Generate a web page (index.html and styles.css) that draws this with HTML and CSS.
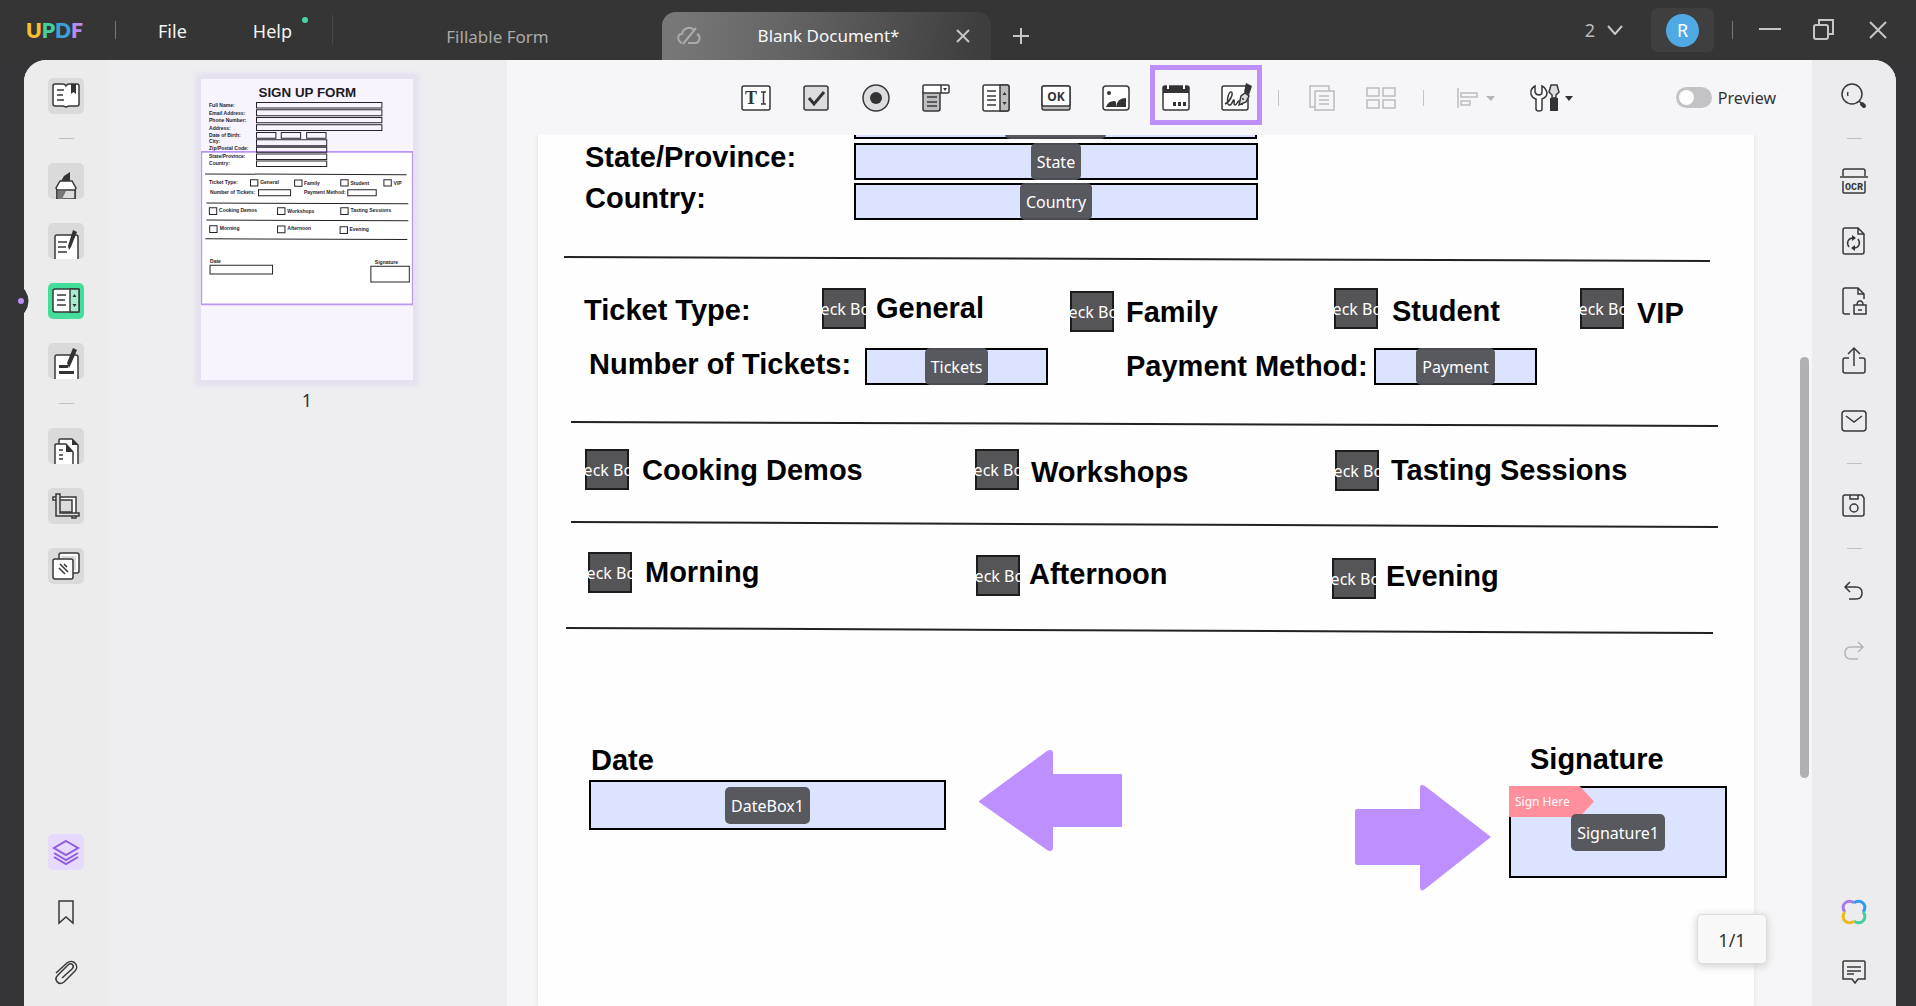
FILE: index.html
```html
<!DOCTYPE html>
<html lang="en">
<head>
<meta charset="utf-8">
<title>UPDF - Blank Document</title>
<link rel="stylesheet" href="styles.css">
</head>
<body>
<header class="titlebar">
  <div class="logo"><span class="logo-u">U</span><span class="logo-p">P</span><span class="logo-d">D</span><span class="logo-f">F</span></div>
  <nav class="menu">
    <button type="button" class="menu-item">File</button>
    <button type="button" class="menu-item">Help<i class="dot"></i></button>
  </nav>
  <div class="tabs">
    <button type="button" class="tab">Fillable Form</button>
    <div class="tab tab-active">
      <svg class="cloud" width="24" height="20" viewBox="0 0 24 20"><path d="M5 17C0 15 0 8 5 8 6 2 13 0 17 4M20 8c4 2 3 9-2 9h-7M19 2 6 18"/></svg>
      <span>Blank Document*</span>
      <button type="button" class="tab-close" aria-label="Close tab"><svg width="14" height="14" viewBox="0 0 14 14"><path d="M1 1l12 12M13 1 1 13"/></svg></button>
    </div>
    <button type="button" class="tab-add" aria-label="New tab"><svg width="18" height="18" viewBox="0 0 18 18"><path d="M9 1v16M1 9h16"/></svg></button>
  </div>
  <div class="window-tools">
    <button type="button" class="count">2 <svg width="16" height="10" viewBox="0 0 16 10"><path d="M1 1l7 8 7-8"/></svg></button>
    <button type="button" class="account"><span class="avatar">R</span></button>
    <div class="controls">
      <button type="button" aria-label="Minimize"><svg width="22" height="22" viewBox="0 0 22 22"><path d="M0 10h22"/></svg></button>
      <button type="button" aria-label="Restore"><svg width="22" height="22" viewBox="0 0 22 22"><rect x="1" y="6" width="14" height="14" rx="2"/><path d="M6 6V1h14v14h-5"/></svg></button>
      <button type="button" aria-label="Close"><svg width="22" height="22" viewBox="0 0 22 22"><path d="M3 3l16 16M19 3 3 19"/></svg></button>
    </div>
  </div>
</header>

<main class="workspace">
  <aside class="rail rail-left">
    <button type="button" class="tool" aria-label="Reader"><svg viewBox="0 0 36 36"><path class="w" d="M7 6h8q2 0 3 2 1-2 3-2h8q2 0 2 2v18q0 2-2 2h-8l-3 1-3-1H7q-2 0-2-2V8q0-2 2-2z"/><path class="s" d="M9 12h7M9 17h6M9 22h7"/><path class="k" d="M23 6h5v10l-2.500-2L23 16z"/></svg></button>
    <hr>
    <button type="button" class="tool" aria-label="Comment"><svg viewBox="0 0 36 36"><path class="k" d="M13 18l3-5 6-4v9z"/><path class="w" d="M9 36v-9l-1-2 4-7h12l4 7-1 2v9"/><path class="g" d="M9 27h18v9H9z"/><path fill="#777" stroke="none" d="M10 28h8l-4 8h-4z"/></svg></button>
    <button type="button" class="tool" aria-label="Edit"><svg viewBox="0 0 36 36"><path class="w" d="M7 36V14q0-2 2-2h19q2 0 2 2v22"/><path class="s" d="M10 19h9M10 24h8M10 29h9"/><path class="k" d="M25 7l4 2-6 15-2 3-1-4z"/></svg></button>
    <button type="button" class="tool tool-active" aria-label="Prepare form"><svg viewBox="0 0 36 36"><rect class="w" x="5" y="6" width="26" height="23" rx="2"/><path class="m" d="M22 6h9v23h-9z"/><path class="s" d="M9 12h9M9 17h8M9 22h9"/><path class="k" d="M24.500 14l2-3 2 3zM24.500 21l2 3 2-3z"/></svg>
      <svg class="notch" viewBox="0 0 14 36"><path d="M0 0h3q0 4 4 7 7 11 0 22-4 3-4 7H0z" fill="#353537"/><circle cx="3" cy="18" r="3" fill="#b98df7" stroke="none"/></svg></button>
    <button type="button" class="tool" aria-label="Redact"><svg viewBox="0 0 36 36"><path class="w" d="M7 36V14q0-2 2-2h19q2 0 2 2v22"/><path class="k" d="M11 22h9v3h-9zM11 28h15v3H11zM25 5l4 2-6 14-2 4-2-5z"/></svg></button>
    <hr>
    <button type="button" class="tool" aria-label="Organize pages"><svg viewBox="0 0 36 36"><path class="w" d="M11 36V12q0-1 1-1h12l6 6v19"/><path class="w" d="M7 36V17q0-1 1-1h10l7 8v12"/><path class="k" d="M18 16v8h7zM24 11v6h6z"/><path class="s" d="M11 22h4M11 27h4M11 31h4"/></svg></button>
    <button type="button" class="tool" aria-label="Crop pages"><svg viewBox="0 0 36 36"><path class="g" d="M11 11h15v13H11z"/><path class="w" d="M5 9h23v21h-4V12H5z"/><path class="g" d="M8 6h4v19h19v3H8z"/></svg></button>
    <button type="button" class="tool" aria-label="Watermark"><svg viewBox="0 0 36 36"><rect class="w" x="11" y="5" width="20" height="20" rx="2"/><path class="g" stroke="none" d="M14 8h14v14H14z"/><rect class="w" x="5" y="11" width="20" height="20" rx="2"/><path class="s" d="M11 20l6 6M12 16l8 8M16 16l3 3"/></svg></button>
    <div class="spacer"></div>
    <button type="button" class="tool tool-layers" aria-label="Thumbnails"><svg viewBox="0 0 36 36"><path d="M18 7l12 7-12 7-12-7zM6 19l12 7 12-7M6 23l12 7 12-7"/></svg></button>
    <button type="button" class="tool tool-plain" aria-label="Bookmarks"><svg viewBox="0 0 36 36"><path d="M11 7h14v22l-7-6-7 6z"/></svg></button>
    <button type="button" class="tool tool-plain" aria-label="Attachments"><svg viewBox="0 0 36 36"><path d="M8 19 19 9c6-5 13 3 8 8L16 28c-5 4-11-2-6-7L20 11c4-3 7 1 4 4L14 24"/></svg></button>
  </aside>

  <aside class="thumbs">
    <a href="#page-1" class="thumb">
      <svg viewBox="63 57 634 901" class="thumb-art">
        <path fill="#f8f4fe" d="M63 57h634v901H63z"/>
        <path fill="#fff" stroke="#bd95f5" stroke-width="5" d="M64 275h632v456H64z"/>
        <text class="thumb-title" x="235" y="111">SIGN UP FORM</text>
        <g class="thumb-text">
          <text x="87" y="141">Full Name:</text><text x="87" y="165">Email Address:</text><text x="87" y="186">Phone Number:</text><text x="87" y="210">Address:</text><text x="87" y="231">Date of Birth:</text><text x="87" y="249">City:</text><text x="87" y="270">Zip/Postal Code:</text><text x="87" y="294">State/Province:</text><text x="87" y="315">Country:</text>
          <text x="87" y="372">Ticket Type:</text><text x="240" y="372">General</text><text x="371" y="375">Family</text><text x="510" y="375">Student</text><text x="639" y="375">VIP</text>
          <text x="90" y="402">Number of Tickets:</text><text x="371" y="402">Payment Method:</text>
          <text x="117" y="456">Cooking Demos</text><text x="321" y="459">Workshops</text><text x="510" y="456">Tasting Sessions</text>
          <text x="119" y="510">Morning</text><text x="321" y="510">Afternoon</text><text x="507" y="513">Evening</text>
          <text x="90" y="608">Date</text><text x="583" y="609">Signature</text>
        </g>
        <g fill="none" stroke="#26232c" stroke-width="3">
          <path d="M229 127h375v17H229zM229 149h375v18H229zM229 172h375v16H229zM229 194h375v17H229zM229 217h58v17h-58zM303 217h58v17h-58zM379 217h58v17h-58zM229 239h210v18H229zM229 261h210v15H229zM229 281h210v17H229zM229 302h210v17H229z"/>
          <path d="M211 358h22v19h-22zM343 359h22v19h-22zM481 358h22v19h-22zM610 358h22v19h-22zM235 388h96v18h-96zM502 388h85v18h-85z"/>
          <path d="M88 442h22v20H88zM292 442h22v20h-22zM481 442h22v20h-22zM89 496h22v20H89zM292 497h22v20h-22zM479 499h22v20h-22zM90 614h187v26H90zM571 617h115v47H571z"/>
          <path d="M75 341l603 2M79 428l604 2M79 479l604 2M76 535l604 2"/>
        </g>
      </svg>
    </a>
    <span class="thumb-number">1</span>
  </aside>

  <section class="viewer">
    <div class="toolbar">
      <button type="button" aria-label="Text field"><svg viewBox="0 0 36 36"><rect class="w" x="4" y="6" width="28" height="24" rx="2"/><text class="t-serif" x="7" y="24">T</text><path class="s" d="M23 12h5M25.500 12v12M23 24h5"/></svg></button>
      <button type="button" aria-label="Check box"><svg viewBox="0 0 36 36"><rect class="g" x="6" y="6" width="24" height="24" rx="2"/><path class="c" d="M11 18l5 6 10-12"/></svg></button>
      <button type="button" aria-label="Radio button"><svg viewBox="0 0 36 36"><circle class="g" cx="18" cy="18" r="13"/><circle class="k" cx="18" cy="18" r="6"/></svg></button>
      <button type="button" aria-label="Dropdown"><svg viewBox="0 0 36 36"><path class="d" d="M5 12h17v17q0 2-2 2H7q-2 0-2-2z"/><rect class="w" x="5" y="5" width="26" height="8" rx="1"/><path class="s" d="M23 5v8M9 17h10M9 22h10M9 26h10"/><path class="k" d="M25 8h4l-2 3z"/></svg></button>
      <button type="button" aria-label="List box"><svg viewBox="0 0 36 36"><rect class="w" x="5" y="5" width="26" height="26" rx="2"/><path class="d" d="M22 5h7q2 0 2 2v22q0 2-2 2h-7z"/><path class="s" d="M9 11h9M9 16h9M9 20h9M9 25h9"/><path class="k" d="M24.500 15l2-3 2 3zM24.500 22l2 3 2-3z"/></svg></button>
      <button type="button" aria-label="Button"><svg viewBox="0 0 36 36"><rect class="d" x="4" y="6" width="28" height="24" rx="2"/><rect class="w" x="4" y="6" width="28" height="20" rx="2"/><text class="t-ok" x="18" y="21">OK</text></svg></button>
      <button type="button" aria-label="Image"><svg viewBox="0 0 36 36"><rect class="w" x="5" y="6" width="26" height="24" rx="3"/><circle class="k" cx="11" cy="13" r="2"/><path class="k" d="M8 27q2-6 8-6 1 0 2 1v5zM18 27q1-9 10-9v9z"/></svg></button>
      <div class="marked">
        <button type="button" aria-label="Date"><svg viewBox="0 0 36 36"><rect class="w" x="5" y="6" width="26" height="24" rx="2"/><path class="k" d="M5 6h26v7H5zM15 22h3v4h-3zM20 22h3v4h-3zM25 22h3v4h-3z"/><path class="n" d="M10 4v5M26 4v5"/></svg></button>
        <button type="button" aria-label="Signature"><svg viewBox="0 0 36 36"><rect class="w" x="4" y="6" width="26" height="24" rx="2"/><path class="s" d="M7 24c6-3 9-12 6-12s-5 12-2 13 4-6 5-5-1 5 1 5 3-5 4-4 0 4 4 3"/><path class="g" d="M21 25l2-9 4-3 4 3-3 6z"/><circle class="k" cx="25" cy="19" r="1"/><path class="k" d="M26 12l2-9 6 3-3 9z"/></svg></button>
      </div>
      <i class="bar"></i>
      <button type="button" class="off" aria-label="Duplicate across pages"><svg viewBox="0 0 36 36"><path d="M12 27H7V6h19v5M12 11h19v19H12zM16 16h10M16 20h10M16 24h10"/></svg></button>
      <button type="button" class="off" aria-label="Create multiple copies"><svg viewBox="0 0 36 36"><path d="M4 8h12v8H4zM20 8h12v8H20zM4 20h12v8H4zM20 20h12v8H20z"/></svg></button>
      <i class="bar"></i>
      <button type="button" class="off wide" aria-label="Align"><svg viewBox="0 0 48 36"><path d="M10 8v20M13 13h16v4H13zM13 21h9v4h-9z"/><path fill="#b5b5b7" stroke="none" d="M38 16h9l-4 5z"/></svg></button>
      <button type="button" class="wide tools" aria-label="Form tools"><svg viewBox="0 0 48 36"><path class="w" d="M9 6q-5 3-4 8 1 4 5 5v10q0 2 3 2t3-2V19q5-2 5-6-1-5-5-7v6q0 3-3 3t-4-3z"/><path class="g" d="M25 5h6l2 7-3 3v3h-4v-3l-3-3z"/><path class="k" d="M24 18h8v13h-8zM39 16h8l-4 5z"/></svg></button>
      <label class="preview"><input type="checkbox" class="switch">Preview</label>
    </div>

    <div class="canvas">
      <article class="sheet" id="page-1">
        <svg class="rules" width="1216" height="871" viewBox="0 0 1216 871">
          <path d="M26 122l1146 4M33 287l1147 4M33 387l1147 5M28 493l1147 5" fill="none" stroke="#222" stroke-width="2"/>
          <path d="M441 666l68-50q6-3 6 3v20h68q1 0 1 1v51q0 1-1 1h-68v20q0 6-6 3l-68-48z" class="arrow"/>
          <path d="M953 702l-66-51q-5-3-5 2v21h-63q-2 0-2 2v52q0 2 2 2h63v21q0 7 5 3z" class="arrow"/>
        </svg>

        <div class="field zip"><input type="text" aria-label="Zip/Postal Code"><span class="chip"></span></div>
        <label class="caption state-label" for="state">State/Province:</label>
        <div class="field state"><input type="text" id="state"><span class="chip">State</span></div>
        <label class="caption country-label" for="country">Country:</label>
        <div class="field country"><input type="text" id="country"><span class="chip">Country</span></div>

        <span class="caption type-label">Ticket Type:</span>
        <div class="tick general"><input type="checkbox" id="general"><span>Check Box1</span></div>
        <label class="caption general-label" for="general">General</label>
        <div class="tick family"><input type="checkbox" id="family"><span>Check Box2</span></div>
        <label class="caption family-label" for="family">Family</label>
        <div class="tick student"><input type="checkbox" id="student"><span>Check Box3</span></div>
        <label class="caption student-label" for="student">Student</label>
        <div class="tick vip"><input type="checkbox" id="vip"><span>Check Box4</span></div>
        <label class="caption vip-label" for="vip">VIP</label>

        <label class="caption tickets-label" for="tickets">Number of Tickets:</label>
        <div class="field tickets"><input type="text" id="tickets"><span class="chip">Tickets</span></div>
        <label class="caption payment-label" for="payment">Payment Method:</label>
        <div class="field payment"><input type="text" id="payment"><span class="chip">Payment</span></div>

        <div class="tick cooking"><input type="checkbox" id="cooking"><span>Check Box5</span></div>
        <label class="caption cooking-label" for="cooking">Cooking Demos</label>
        <div class="tick workshops"><input type="checkbox" id="workshops"><span>Check Box6</span></div>
        <label class="caption workshops-label" for="workshops">Workshops</label>
        <div class="tick tasting"><input type="checkbox" id="tasting"><span>Check Box7</span></div>
        <label class="caption tasting-label" for="tasting">Tasting Sessions</label>

        <div class="tick morning"><input type="checkbox" id="morning"><span>Check Box8</span></div>
        <label class="caption morning-label" for="morning">Morning</label>
        <div class="tick afternoon"><input type="checkbox" id="afternoon"><span>Check Box9</span></div>
        <label class="caption afternoon-label" for="afternoon">Afternoon</label>
        <div class="tick evening"><input type="checkbox" id="evening"><span>Check Box0</span></div>
        <label class="caption evening-label" for="evening">Evening</label>

        <label class="caption date-label" for="date">Date</label>
        <div class="field date"><input type="text" id="date"><span class="chip">DateBox1</span></div>
        <label class="caption signature-label" for="signature">Signature</label>
        <div class="field signature"><input type="text" id="signature"><span class="flag">Sign Here</span><span class="chip">Signature1</span></div>
      </article>
      <i class="scroll-thumb"></i>
      <output class="page-count">1/1</output>
    </div>
  </section>

  <aside class="rail rail-right">
    <button type="button" class="tool tool-plain" aria-label="Search"><svg viewBox="0 0 36 36"><circle cx="16" cy="16" r="10"/><path d="M12 14q-1 2 0 4M23 23l2 2"/><path stroke-width="4" stroke-linecap="round" d="M26 26l2 2"/></svg></button>
    <hr>
    <button type="button" class="tool tool-plain" aria-label="OCR"><svg viewBox="0 0 36 36"><path d="M7 13V8q0-2 2-2h18q2 0 2 2v5M4 14h28M7 18v11q0 1 1 1h20q1 0 1-1V18"/><text class="t-ocr" x="18" y="27">OCR</text></svg></button>
    <button type="button" class="tool tool-plain" aria-label="Convert"><svg viewBox="0 0 36 36"><path d="M9 5h13l6 6v18q0 2-2 2H9q-2 0-2-2V7q0-2 2-2zM22 5v6h6M13 24c-3-4-1-9 4-9M22 16c3 4 1 9-4 9"/><path class="k" d="M16 12v6l4-3zM19 22v6l-4-3z"/></svg></button>
    <button type="button" class="tool tool-plain" aria-label="Protect"><svg viewBox="0 0 36 36"><path d="M14 31H9q-2 0-2-2V7q0-2 2-2h13l6 6v5M22 5v6h6M18 22h12v9H18zM21 22q0-4 3-4t3 4M22 27h4"/></svg></button>
    <button type="button" class="tool tool-plain" aria-label="Share"><svg viewBox="0 0 36 36"><path d="M13 15H9q-2 0-2 2v11q0 2 2 2h18q2 0 2-2V17q0-2-2-2h-4M18 23V6M12 11l6-6 6 6"/></svg></button>
    <button type="button" class="tool tool-plain" aria-label="Email"><svg viewBox="0 0 36 36"><rect x="6" y="8" width="24" height="20" rx="3"/><path d="M10 13l8 6 8-6"/></svg></button>
    <hr>
    <button type="button" class="tool tool-plain" aria-label="Save"><svg viewBox="0 0 36 36"><path d="M9 7h17l2 3v16q0 2-2 2H9q-2 0-2-2V9q0-2 2-2zM14 7v4h8V7"/><circle cx="18" cy="20" r="4"/></svg></button>
    <hr>
    <button type="button" class="tool tool-plain" aria-label="Undo"><svg viewBox="0 0 36 36"><path d="M14 9l-5 5 5 5M9 14h11q6 0 6 6t-6 6h-7"/></svg></button>
    <button type="button" class="tool tool-plain faded" aria-label="Redo" disabled><svg viewBox="0 0 36 36"><path d="M22 9l5 5-5 5M27 14H15q-6 0-6 6t6 6h7"/></svg></button>
    <div class="spacer"></div>
    <button type="button" class="tool tool-plain" aria-label="UPDF AI"><svg viewBox="0 0 36 36"><g stroke-width="3"><path stroke="#a67ae8" d="M9 18A6 6 0 1 1 18 9"/><path stroke="#2f9bf0" d="M18 9A6 6 0 1 1 27 18"/><path stroke="#42cf9c" d="M27 18A6 6 0 1 1 18 27"/><path stroke="#f2b61a" d="M18 27A6 6 0 1 1 9 18"/></g></svg></button>
    <button type="button" class="tool tool-plain" aria-label="Comments"><svg viewBox="0 0 36 36"><path d="M8 7h20q1 0 1 1v17h-7l-3 4-3-4H7V8q0-1 1-1zM11 13h14M11 17h14M11 20h7"/></svg></button>
  </aside>
</main>
</body>
</html>
```
FILE: styles.css
```css
* { box-sizing: border-box; }

body {
  margin: 0;
  height: 100vh;
  display: flex;
  flex-direction: column;
  overflow: hidden;
  background: #353537;
  color: #333;
  font: 16px/24px "Noto Sans", "Open Sans", sans-serif;
}

button {
  padding: 0;
  border: 0;
  background: none;
  color: inherit;
  font: inherit;
}

svg { display: block; }

/* Title bar */
.titlebar {
  flex: none;
  display: flex;
  align-items: center;
  height: 60px;
  padding-left: 26px;
  background: #353535;
  color: #f4f4f4;
}
.titlebar svg { fill: none; stroke: #c6c6c6; stroke-width: 2; }
.logo {
  width: 90px;
  height: 18px;
  border-right: 1px solid #777;
  font: 800 21px/18px Lato, sans-serif;
}
.logo-u { color: #f5c02c; }
.logo-p { color: #45cf9a; }
.logo-d { color: #3c9fdc; }
.logo-f { color: #b58cf0; }
.menu {
  display: flex;
  gap: 66px;
  width: 217px;
  height: 30px;
  padding: 2px 0 0 42px;
  border-right: 1px solid #484848;
  font-size: 18px;
}
.menu-item { position: relative; }
.dot {
  position: absolute;
  top: 0;
  right: -16px;
  width: 6px;
  height: 6px;
  border-radius: 50%;
  background: #45d6a0;
}
.tabs {
  flex: 1;
  display: flex;
  align-self: stretch;
  align-items: flex-end;
  min-width: 0;
}
.tab {
  flex: 0 1 329px;
  height: 48px;
  padding-top: 2px;
  color: #aaa;
  font-size: 17px;
}
.tab-active {
  display: flex;
  align-items: center;
  justify-content: space-between;
  padding: 2px 21px 2px 15px;
  border-radius: 14px 14px 0 0;
  background: linear-gradient(100deg, #777 5%, #666 35%, #3e3e3e 95%);
  color: #f8f8f8;
}
.titlebar .cloud { stroke: #aaa; }
.tab-add { width: 60px; height: 48px; display: grid; place-items: center; }
.window-tools { display: flex; align-items: center; }
.count { display: flex; align-items: center; gap: 12px; color: #bbb; font-size: 18px; }
.account {
  display: grid;
  place-items: center;
  width: 63px;
  height: 44px;
  margin: 0 18px 0 28px;
  border-radius: 6px;
  background: #3f3f3f;
}
.avatar {
  width: 33px;
  height: 33px;
  border-radius: 50%;
  background: #4faae4;
  color: #fff;
  font-size: 18px;
  line-height: 33px;
}
.controls {
  display: flex;
  align-items: center;
  gap: 32px;
  height: 18px;
  padding: 0 27px 0 26px;
  border-left: 1px solid #777;
}

/* Workspace */
.workspace {
  flex: 1;
  display: flex;
  min-height: 0;
  margin: 0 20px 0 24px;
  border-radius: 22px 22px 0 0;
  background: #f6f6f8;
}
.rail {
  flex: none;
  display: flex;
  flex-direction: column;
  align-items: center;
  gap: 24px;
  width: 84px;
  padding: 18px 0 16px;
  background: #ececec;
}
.rail-left { border-radius: 22px 0 0 0; }
.rail-right { border-radius: 0 22px 0 0; background: #ececee; }
.rail hr {
  flex: none;
  width: 15px;
  height: 1px;
  margin: 0;
  border: 0;
  background: #c0c0c0;
}
.spacer { flex: 1; }
.tool {
  flex: none;
  position: relative;
  width: 36px;
  height: 36px;
  border-radius: 5px;
  background: #dadada;
}
.tool svg, .toolbar svg {
  width: 100%;
  height: 100%;
  fill: none;
  stroke: #38383a;
  stroke-width: 1.5;
}
.tool-active { background: #43dd9c; }
.tool-layers { background: #e6dafe; }
.tool-layers svg { stroke: #8f5be0; stroke-width: 2; }
.tool-plain { background: none; }
.faded { opacity: 0.3; }
.tool .notch {
  position: absolute;
  top: 0;
  left: -30px;
  width: 14px;
  height: 36px;
  stroke: none;
}

/* Icon parts */
.w { fill: #fff; }
.g { fill: #dcdcde; }
.d { fill: #bdbdbf; }
.m { fill: #a6ecce; }
.k { fill: #333; stroke: none; }
.c { stroke: #333; stroke-width: 3; }
.n { stroke: #fff; stroke-width: 2; }
.t-serif { fill: #333; stroke: none; font: bold 18px "Liberation Serif", serif; }
.t-ok { fill: #333; stroke: none; font: bold 12px "Noto Sans", sans-serif; text-anchor: middle; }
.t-ocr { fill: #333; stroke: none; font: bold 10px "Liberation Mono", monospace; text-anchor: middle; }

/* Thumbnails */
.thumbs {
  flex: none;
  display: flex;
  flex-direction: column;
  align-items: center;
  width: 399px;
  padding: 19px 1px 0 0;
  background: #eeeef0;
}
.thumb { width: 212px; box-shadow: 0 0 5px 6px #e5e1ee; }
.thumb-art { width: 100%; }
.thumb-title { font: bold 40px "Liberation Sans", sans-serif; fill: #1d1a22; }
.thumb-text { font: bold 15px "Liberation Sans", sans-serif; fill: #26232c; }
.thumb-number { margin-top: 8px; font-size: 18px; }

/* Viewer */
.viewer { flex: 1; display: flex; flex-direction: column; min-width: 0; }
.toolbar {
  flex: none;
  display: flex;
  align-items: center;
  gap: 24px;
  height: 75px;
  padding: 0 36px 0 231px;
}
.toolbar button { flex: none; width: 36px; height: 36px; }
.toolbar .wide { width: 48px; }
.toolbar .tools { margin-left: 6px; }
.toolbar .off svg { stroke: #bcbcbe; }
.marked {
  display: flex;
  align-items: center;
  gap: 24px;
  height: 60px;
  margin: 0 -8px 6px;
  padding: 6px 3px 0;
  border: 5px solid #bd8ff9;
}
.bar { flex: none; width: 1px; height: 16px; background: #c4c4c6; }
.preview {
  display: flex;
  align-items: center;
  gap: 6px;
  margin-left: auto;
}
.switch {
  appearance: none;
  display: flex;
  width: 36px;
  height: 21px;
  margin: 0;
  padding: 3px;
  border-radius: 11px;
  background: #c3c3c5;
}
.switch::before { content: ""; width: 15px; height: 15px; border-radius: 50%; background: #fff; }

.canvas {
  flex: 1;
  position: relative;
  display: flex;
  min-height: 0;
  padding: 0 58px 0 31px;
  overflow: hidden;
}
.sheet {
  flex: 1;
  position: relative;
  background: #fefefe;
  box-shadow: 0 0 4px #ddd;
}
.scroll-thumb {
  position: absolute;
  top: 222px;
  right: 3px;
  width: 9px;
  height: 421px;
  border-radius: 5px;
  background: #b0b0b2;
}
.page-count {
  position: absolute;
  right: 45px;
  bottom: 42px;
  width: 70px;
  height: 50px;
  border: 1px solid #dcdcdc;
  border-radius: 5px;
  background: #f8f8f8;
  box-shadow: 0 2px 8px #ccc;
  font-size: 18px;
  line-height: 50px;
  text-align: center;
}

/* Form objects, placed freely on the sheet */
.rules { position: absolute; top: 0; left: 0; }
.arrow { fill: #bd8fff; }
.caption, .field, .tick { position: absolute; }
.caption {
  color: #000;
  font: bold 29px/32px "Liberation Sans", Arial, sans-serif;
  white-space: nowrap;
}
.field { display: grid; place-items: center; height: 35px; }
.field input {
  grid-area: 1 / 1;
  width: 100%;
  height: 100%;
  margin: 0;
  padding: 0;
  border: 2px solid #000;
  border-radius: 0;
  background: #dce3ff;
}
.chip {
  grid-area: 1 / 1;
  z-index: 1;
  height: 37px;
  padding: 0 6px;
  border-radius: 5px;
  background: #505156f2;
  color: #fff;
  line-height: 38px;
}
.zip .chip { width: 101px; }
.tick {
  display: flex;
  justify-content: center;
  width: 44px;
  height: 41px;
  overflow: clip;
  overflow-clip-margin: 1px;
  color: #fff;
  line-height: 42px;
}
.tick input {
  appearance: none;
  position: absolute;
  inset: 0;
  margin: 0;
  border: 2px solid #1c1c1c;
  background: #555557;
}
.tick span { position: relative; white-space: nowrap; }

.zip { left: 316px; top: -33px; width: 403px; }
.state { left: 316px; top: 8px; width: 404px; }
.country { left: 316px; top: 48px; width: 404px; }
.tickets { left: 327px; top: 213px; width: 183px; }
.payment { left: 836px; top: 213px; width: 163px; }
.date { left: 51px; top: 645px; width: 357px; height: 50px; }
.signature { left: 971px; top: 651px; width: 218px; height: 92px; }
.state-label { left: 47px; top: 6px; }
.country-label { left: 47px; top: 47px; }
.type-label { left: 46px; top: 159px; }
.general-label { left: 338px; top: 157px; }
.family-label { left: 588px; top: 161px; }
.student-label { left: 854px; top: 160px; }
.vip-label { left: 1099px; top: 162px; }
.tickets-label { left: 51px; top: 213px; }
.payment-label { left: 588px; top: 215px; }
.cooking-label { left: 104px; top: 319px; }
.workshops-label { left: 493px; top: 321px; }
.tasting-label { left: 853px; top: 319px; }
.morning-label { left: 107px; top: 421px; }
.afternoon-label { left: 491px; top: 423px; }
.evening-label { left: 848px; top: 425px; }
.date-label { left: 53px; top: 609px; }
.signature-label { left: 992px; top: 608px; }
.general { left: 284px; top: 153px; }
.family { left: 532px; top: 156px; }
.student { left: 796px; top: 153px; }
.vip { left: 1042px; top: 153px; }
.cooking { left: 47px; top: 314px; }
.workshops { left: 437px; top: 314px; }
.tasting { left: 797px; top: 315px; }
.morning { left: 50px; top: 417px; }
.afternoon { left: 438px; top: 420px; }
.evening { left: 794px; top: 423px; }

.flag {
  position: absolute;
  top: 0;
  left: 0;
  z-index: 1;
  width: 85px;
  height: 31px;
  padding-left: 6px;
  background: #ff8f9b;
  clip-path: polygon(0 0, 83% 0, 100% 50%, 83% 100%, 0 100%);
  color: #fff;
  font-size: 12px;
  line-height: 32px;
}
```
